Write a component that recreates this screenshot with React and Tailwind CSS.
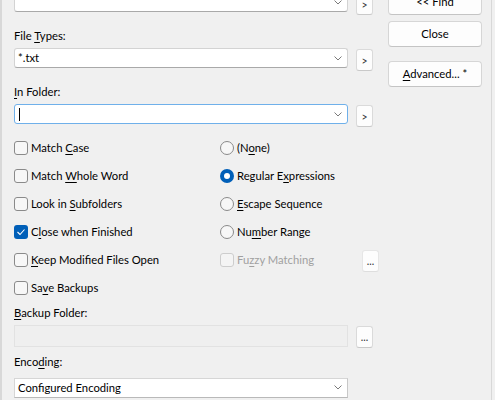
import React from "react";

function Chevron() {
  return (
    <svg width="8" height="5" viewBox="0 0 8 5" className="mr-[5px] shrink-0">
      <path d="M0.5 0.5 L4 4 L7.5 0.5" fill="none" stroke="#7a7a7a" strokeWidth="1" />
    </svg>
  );
}

function Combo({ children, focus }) {
  return (
    <div
      className={
        focus
          ? "flex items-center w-[334px] h-[20px] bg-white rounded-[3px] border border-[#6fb0ea] pl-[3px]"
          : "flex items-center w-[334px] h-[20px] bg-white rounded-[3px] border border-[#d3d3d3] border-b-[#a9a9a9] pl-[3px]"
      }
    >
      <div className="flex-1 flex items-center leading-[16px]">{children}</div>
      <Chevron />
    </div>
  );
}

function SmallBtn({ children, className = "" }) {
  return (
    <div
      className={
        "w-[17px] h-[22px] bg-[#fdfdfd] rounded-[3px] border border-[#dadada] border-b-[#c9c9c9] flex items-center justify-center text-[10.5px] leading-none text-[#333] pt-[2px] " +
        className
      }
    >
      {children}
    </div>
  );
}

function Btn({ children, className = "" }) {
  return (
    <div
      className={
        "w-[94px] h-[26px] bg-[#fdfdfd] rounded-[4px] border border-[#d6d6d6] border-b-[#c4c4c4] flex items-center justify-center leading-[16px] " +
        className
      }
    >
      {children}
    </div>
  );
}

function U({ children }) {
  return <span className="underline underline-offset-[2px] decoration-[1px]">{children}</span>;
}

function Check({ checked, disabled, children }) {
  return (
    <div className="flex items-center gap-[3px] h-[28px]">
      {checked ? (
        <div className="w-[14px] h-[14px] rounded-[3px] bg-[#005fb8] flex items-center justify-center">
          <svg width="10" height="8" viewBox="0 0 10 8">
            <path d="M1.5 4 L4 6.5 L8.5 1.5" fill="none" stroke="white" strokeWidth="1.1" />
          </svg>
        </div>
      ) : disabled ? (
        <div className="w-[14px] h-[14px] rounded-[3px] border border-[#cdcdcd] bg-[#f4f4f4]" />
      ) : (
        <div className="w-[14px] h-[14px] rounded-[3px] border border-[#8a8a8a] bg-[#f7f7f7]" />
      )}
      <span className={disabled ? "text-[#a0a0a0] leading-[16px]" : "leading-[16px]"}>{children}</span>
    </div>
  );
}

function Radio({ checked, children }) {
  return (
    <div className="flex items-center gap-[3px] h-[28px]">
      {checked ? (
        <div className="w-[14px] h-[14px] rounded-full bg-[#005fb8] flex items-center justify-center">
          <div className="w-[6px] h-[6px] rounded-full bg-white" />
        </div>
      ) : (
        <div className="w-[14px] h-[14px] rounded-full border border-[#8a8a8a] bg-[#f7f7f7]" />
      )}
      <span className="leading-[16px]">{children}</span>
    </div>
  );
}

export default function App() {
  return (
    <div className="w-[495px] h-[400px] overflow-hidden bg-[#f0f0f0]">
      <div className="w-[492px] h-[400px] border-l-2 border-r border-[#d8d8d8] flex items-start gap-[15px] pl-[12px] font-['Lato',sans-serif] text-[11.25px] text-black">
        <div className="w-[359px] flex flex-col mt-[-8px]">
          <div className="flex items-start gap-[8px]">
            <Combo />
            <SmallBtn className="mt-[1px]">&gt;</SmallBtn>
          </div>
          <div className="mt-[12.5px] leading-[16px]">
            File <U>T</U>ypes:
          </div>
          <div className="flex items-start gap-[8px] mt-[4.5px]">
            <Combo>*.txt</Combo>
            <SmallBtn className="mt-[1px]">&gt;</SmallBtn>
          </div>
          <div className="mt-[12.5px] leading-[16px]">
            <U>I</U>n Folder:
          </div>
          <div className="flex items-start gap-[8px] mt-[4.5px]">
            <Combo focus>
              <div className="w-[1px] h-[13px] bg-black ml-[1px]" />
            </Combo>
            <SmallBtn className="mt-[1px]">&gt;</SmallBtn>
          </div>

          <div className="grid grid-cols-[206px_1fr] mt-[6.5px]">
            <Check>
              Match <U>C</U>ase
            </Check>
            <Radio>
              (N<U>o</U>ne)
            </Radio>
            <Check>
              Match <U>W</U>hole Word
            </Check>
            <Radio checked>
              Regular E<U>x</U>pressions
            </Radio>
            <Check>
              Look in <U>S</U>ubfolders
            </Check>
            <Radio>
              <U>E</U>scape Sequence
            </Radio>
            <Check checked>
              C<U>l</U>ose when Finished
            </Check>
            <Radio>
              Nu<U>m</U>ber Range
            </Radio>
            <Check>
              <U>K</U>eep Modified Files Open
            </Check>
            <div className="flex items-center">
              <div className="w-[142px]">
                <Check disabled>
                  Fu<U>z</U>zy Matching
                </Check>
              </div>
              <SmallBtn className="h-[21px] mt-[2px] border-[#e6e6e6] border-b-[#dedede] text-[#9a9a9a]">...</SmallBtn>
            </div>
            <Check>
              Sa<U>v</U>e Backups
            </Check>
            <div />
          </div>

          <div className="mt-[3.5px] leading-[16px]">
            <U>B</U>ackup Folder:
          </div>
          <div className="flex items-start gap-[8px] mt-[3.5px]">
            <div className="w-[334px] h-[22px] border border-[#e2e2e2] bg-[#efefef]" />
            <SmallBtn className="h-[21px] mt-[1px] text-[#6a7fa8]">...</SmallBtn>
          </div>
          <div className="mt-[6px] leading-[16px]">
            Enco<U>d</U>ing:
          </div>
          <div className="mt-[8px]">
            <div className="flex items-center w-[334px] h-[20px] bg-white border border-[#d6d6d6] border-b-[#b9b9b9] border-r-[#c8c8c8] pl-[3px]">
              <div className="flex-1 leading-[16px]">Configured Encoding</div>
              <Chevron />
            </div>
          </div>
        </div>

        <div className="w-[94px] flex flex-col mt-[-11px]">
          <Btn>&lt;&lt; Find</Btn>
          <Btn className="mt-[6px]">Close</Btn>
          <Btn className="mt-[14px]">
            <span>
              <U>A</U>dvanced... *
            </span>
          </Btn>
        </div>
      </div>
    </div>
  );
}
